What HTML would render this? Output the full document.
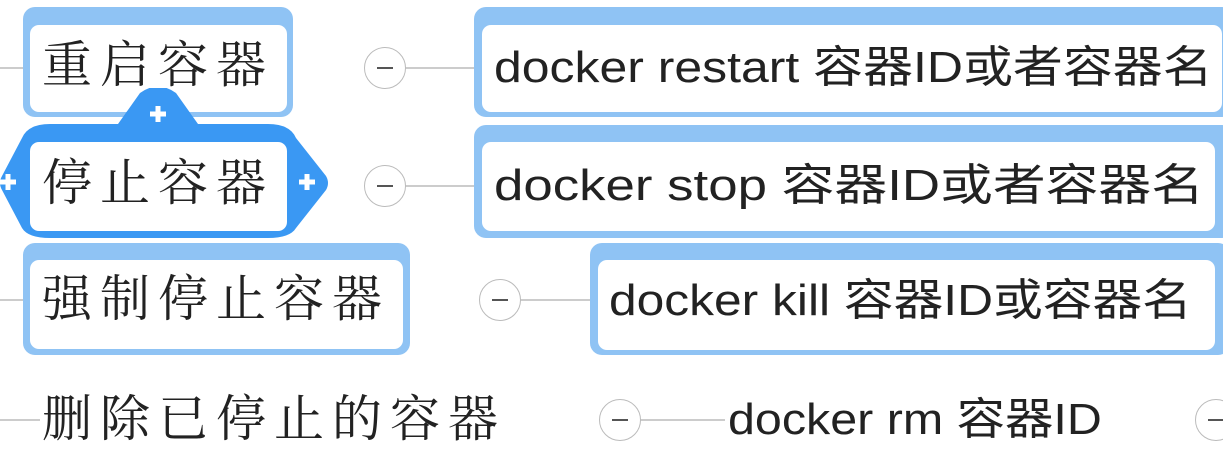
<!DOCTYPE html>
<html><head><meta charset="utf-8"><style>
body{margin:0;width:1223px;height:463px;background:#fff;position:relative;overflow:hidden;font-family:"Liberation Sans","Noto Sans CJK SC",sans-serif;color:#222}
.a{position:absolute}
.o{position:absolute;background:#8fc3f4;border-radius:12px}
.i{position:absolute;background:#fff;border-radius:9px}
.l{position:absolute;font-family:"Liberation Serif","Noto Serif CJK SC",serif;font-size:50px;letter-spacing:8px;line-height:1;white-space:nowrap;color:#222}
.r{position:absolute;font-size:44px;line-height:1;white-space:nowrap;color:#222;transform-origin:0 0}
.c{position:absolute;width:42px;height:42px;border:1.5px solid #bbb;border-radius:50%;background:#fff;box-sizing:border-box}
.c:after{content:"";position:absolute;left:12px;right:12px;top:19px;height:2px;background:#555}
.h{position:absolute;height:2px;background:#ccc}
</style></head><body>
<div class="h" style="left:0;top:67px;width:24px"></div>
<div class="h" style="left:0;top:299px;width:24px"></div>
<div class="h" style="left:0;top:419px;width:40px"></div>
<div class="h" style="left:405px;top:67px;width:72px"></div>
<div class="h" style="left:405px;top:185px;width:72px"></div>
<div class="h" style="left:520px;top:299px;width:72px"></div>
<div class="h" style="left:640px;top:419px;width:85px"></div>

<div class="o" style="left:23px;top:7px;width:270px;height:110px"></div>
<div class="i" style="left:30px;top:25px;width:257px;height:87px"></div>
<div class="l" style="left:42px;top:40px">重启容器</div>
<div class="o" style="left:474px;top:7px;width:760px;height:110px"></div>
<div class="i" style="left:482px;top:25px;width:740px;height:87px"></div>
<div class="r" style="left:494px;top:46px;transform:scaleX(1.135)">docker restart 容器ID或者容器名</div>

<svg class="a" style="left:0;top:88px" width="335" height="155">
<path d="M118 36 L140 5 Q158 -8 176 5 L198 36 L268 36 Q290 36 296 50 L326 88 Q330 95 326 102 L296 140 Q290 150 268 150 L50 150 Q28 150 22 140 L2 102 Q-2 95 2 88 L22 50 Q28 36 50 36 Z" fill="#3a98f3"/>
<path d="M150 26h16M158 18v16" stroke="#fff" stroke-width="5"/>
<path d="M0 94h16M8 86v16" stroke="#fff" stroke-width="5"/>
<path d="M299 94h16M307 86v16" stroke="#fff" stroke-width="5"/>
</svg>
<div class="i" style="left:30px;top:142px;width:257px;height:89px"></div>
<div class="l" style="left:42px;top:158px">停止容器</div>
<div class="o" style="left:474px;top:125px;width:760px;height:113px"></div>
<div class="i" style="left:482px;top:142px;width:733px;height:89px"></div>
<div class="r" style="left:494px;top:164px;transform:scaleX(1.2)">docker stop 容器ID或者容器名</div>

<div class="o" style="left:23px;top:243px;width:387px;height:112px"></div>
<div class="i" style="left:30px;top:260px;width:373px;height:89px"></div>
<div class="l" style="left:42px;top:274px">强制停止容器</div>
<div class="o" style="left:590px;top:243px;width:640px;height:112px"></div>
<div class="i" style="left:598px;top:260px;width:617px;height:90px"></div>
<div class="r" style="left:609px;top:279px;transform:scaleX(1.13)">docker kill 容器ID或容器名</div>

<div class="l" style="left:42px;top:394px">删除已停止的容器</div>
<div class="r" style="left:728px;top:398px;transform:scaleX(1.1)">docker rm 容器ID</div>

<div class="c" style="left:364px;top:47px"></div>
<div class="c" style="left:364px;top:165px"></div>
<div class="c" style="left:479px;top:279px"></div>
<div class="c" style="left:599px;top:399px"></div>
<div class="c" style="left:1195px;top:399px"></div>
</body></html>
